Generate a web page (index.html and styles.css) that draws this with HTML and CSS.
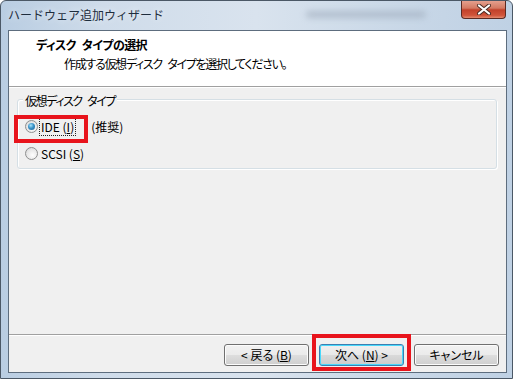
FILE: index.html
```html
<!DOCTYPE html>
<html lang="ja">
<head>
    <meta charset="UTF-8">
    <title>ハードウェア追加ウィザード</title>
    <link rel="stylesheet" href="styles.css">
</head>
<body>
    <div class="window">
        <div class="titlebar">
            <span class="title">ハードウェア追加ウィザード</span>
            <span class="glass-blur"></span>
            <span class="close">
                <svg width="16" height="11" viewBox="0 0 16 11">
                    <path d="M3 1.5 L13 9.5 M13 1.5 L3 9.5" stroke="#4a2a22" stroke-width="4" stroke-linecap="round"/>
                    <path d="M3 1.5 L13 9.5 M13 1.5 L3 9.5" stroke="#ffffff" stroke-width="2.2" stroke-linecap="round"/>
                </svg>
            </span>
        </div>

        <div class="client">
            <div class="header">
                <div class="header-title">ディスク タイプの選択</div>
                <div class="header-sub">作成する仮想ディスク タイプを選択してください。</div>
            </div>

            <div class="content">
                <div class="group">
                    <div class="group-label">仮想ディスク タイプ</div>
                    <div class="options">
                        <div class="option">
                            <span class="radio checked"></span>
                            <span class="option-text focus">IDE (<u>I</u>)</span>
                            <span class="option-note">(推奨)</span>
                        </div>
                        <div class="option">
                            <span class="radio"></span>
                            <span class="option-text">SCSI (<u>S</u>)</span>
                        </div>
                    </div>
                </div>
            </div>

            <div class="footer">
                <button class="btn">&lt; 戻る (<u>B</u>)</button>
                <button class="btn default">次へ (<u>N</u>) &gt;</button>
                <button class="btn">キャンセル</button>
            </div>
        </div>

        <!-- red annotation boxes over the screenshot -->
        <span class="mark mark-ide"></span>
        <span class="mark mark-next"></span>
    </div>
</body>
</html>
```

FILE: styles.css
```css
html, body {
    margin: 0;
    padding: 0;
}
body {
    font-family: "Noto Sans CJK JP", "Liberation Sans", sans-serif;
    font-size: 12px;
    color: #000;
    background: #fff;
}
.window {
    position: relative;
    width: 513px;
    height: 379px;
    box-sizing: border-box;
    padding: 29px 7px 7px 7px;
    border: 1px solid #4b5866;
    border-radius: 6px 6px 0 0;
    background: linear-gradient(90deg, #b9cde2 0%, #cfdcea 20%, #d9e3ee 50%, #c8d7e7 80%, #bfd1e4 100%);
    overflow: hidden;
}
.titlebar {
    position: absolute;
    left: 0;
    top: 0;
    right: 0;
    height: 28px;
    display: flex;
    align-items: center;
}
.title {
    padding-left: 7px;
    margin-top: -2px;
    font-size: 12px;
    color: #1e2d3d;
    text-shadow: 0 0 6px #eef4fa;
}
.glass-blur {
    position: absolute;
    left: 305px;
    top: 10px;
    width: 120px;
    height: 7px;
    border-radius: 5px;
    background: #9eabbb;
    filter: blur(3px);
    opacity: 0.6;
}
.close {
    position: absolute;
    right: 6px;
    top: -1px;
    width: 45px;
    height: 19px;
    box-sizing: border-box;
    border: 1px solid #5b2a22;
    border-top: none;
    border-radius: 0 0 4px 4px;
    background: linear-gradient(180deg, #e8a593 0%, #d47a63 45%, #c2412a 55%, #d0543a 85%, #e38a6f 100%);
    display: flex;
    align-items: center;
    justify-content: center;
}
.close svg {
    display: block;
}
.client {
    width: 499px;
    height: 343px;
    box-sizing: border-box;
    border: 1px solid #5d6d7e;
    background: #f0f0f0;
    display: flex;
    flex-direction: column;
}
.header {
    height: 56px;
    background: #fff;
    border-bottom: 1px solid #a0a0a0;
    box-shadow: 0 1px 0 #ffffff;
    box-sizing: border-box;
    padding-top: 5px;
    font-feature-settings: "palt";
}
.header-title {
    padding-left: 27px;
    font-weight: bold;
    line-height: 18px;
    letter-spacing: -0.6px;
    word-spacing: 4px;
}
.header-sub {
    padding-left: 55px;
    margin-top: 1px;
    line-height: 18px;
    letter-spacing: -1.3px;
    word-spacing: 4px;
}
.content {
    flex: 1;
    padding: 12px 9px 0 8px;
    border-bottom: 1px solid #a0a0a0;
}
.group {
    height: 70px;
    box-sizing: border-box;
    border: 1px solid #d5dfe5;
    border-radius: 3px;
    box-shadow: inset 1px 1px 0 #fff, 1px 1px 0 #fff;
    padding: 0 7px;
    font-feature-settings: "palt";
}
.group-label {
    display: table;
    margin: -7px 0 0 -2px;
    padding: 0 2px;
    background: #f0f0f0;
    line-height: 16px;
    letter-spacing: -1.4px;
    word-spacing: 4px;
}
.options {
    margin-top: 4px;
}
.option {
    display: flex;
    align-items: center;
    height: 27px;
}
.radio {
    width: 13px;
    height: 13px;
    box-sizing: border-box;
    border: 1px solid #8e8f8f;
    border-radius: 50%;
    background: radial-gradient(circle at 60% 65%, #fefefe 0%, #e6e6e6 60%, #cfcfcf 100%);
    position: relative;
    flex: none;
}
.radio.checked::after {
    content: "";
    position: absolute;
    left: 2px;
    top: 2px;
    width: 7px;
    height: 7px;
    border-radius: 50%;
    background: radial-gradient(circle at 40% 35%, #a9e4fb 0%, #3a93c8 45%, #1f5f93 100%);
}
.option-text {
    margin-left: 1px;
    padding: 1px 1px;
    line-height: 15px;
    border: 1px dotted transparent;
}
.option-text.focus {
    border-color: #222;
}
.option-note {
    margin-left: 15px;
}
.footer {
    border-top: 1px solid #fff;
    height: 37px;
    box-sizing: border-box;
    display: flex;
    justify-content: flex-end;
    gap: 10px;
    padding: 8px 7px 0 0;
}
.btn {
    width: 85px;
    height: 22px;
    box-sizing: border-box;
    border: 1px solid #707070;
    border-radius: 3px;
    background: linear-gradient(180deg, #f2f2f2 0%, #ebebeb 48%, #dddddd 52%, #cfcfcf 100%);
    box-shadow: inset 0 0 0 1px #fcfcfc;
    font-family: "Noto Sans CJK JP", "Liberation Sans", sans-serif;
    font-size: 12px;
    font-feature-settings: "palt";
    color: #000;
    padding: 0;
    line-height: 18px;
}
.btn.default {
    border-color: #3c7fb1;
    box-shadow: inset 0 0 0 1px #48d8fb;
    background: linear-gradient(180deg, #f0f0f0 0%, #e8e8e8 48%, #d9d9d9 52%, #cccccc 100%);
}
.mark {
    position: absolute;
    border: 4px solid #e8141c;
    box-sizing: border-box;
}
.mark-ide {
    left: 13px;
    top: 114px;
    width: 74px;
    height: 28px;
}
.mark-next {
    left: 311px;
    top: 333px;
    width: 99px;
    height: 37px;
}
```
